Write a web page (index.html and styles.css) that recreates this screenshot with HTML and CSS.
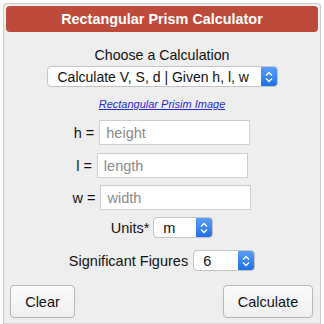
FILE: index.html
```html
<!DOCTYPE html>
<html lang="en">
<head>
    <meta charset="UTF-8">
    <meta name="viewport" content="width=device-width, initial-scale=1.0">
    <title>Rectangular Prism Calculator</title>
    <link rel="stylesheet" href="styles.css">
</head>
<body>
    <div class="calc">
        <div class="calc-head">Rectangular Prism Calculator</div>
        <div class="calc-body">
            <div class="row choose">Choose a Calculation</div>
            <div class="row sel-row">
                <span class="sel sel-wide">
                    <select>
                        <option>Calculate V, S, d | Given h, l, w</option>
                    </select>
                    <span class="stepper">
                        <svg width="8" height="12" viewBox="0 0 8 12"><path d="M1 4.5 L4 1.5 L7 4.5 M1 7.5 L4 10.5 L7 7.5" fill="none" stroke="#fff" stroke-width="1.4"/></svg>
                    </span>
                </span>
            </div>
            <div class="row link-row"><a href="#">Rectangular Prisim Image</a></div>

            <div class="row field h-row"><label>h =</label><input type="text" placeholder="height"></div>
            <div class="row field l-row"><label>l =</label><input type="text" placeholder="length"></div>
            <div class="row field w-row"><label>w =</label><input type="text" placeholder="width"></div>

            <div class="row units-row">
                <label>Units*</label>
                <span class="sel sel-units">
                    <select><option>m</option></select>
                    <span class="stepper">
                        <svg width="8" height="12" viewBox="0 0 8 12"><path d="M1 4.5 L4 1.5 L7 4.5 M1 7.5 L4 10.5 L7 7.5" fill="none" stroke="#fff" stroke-width="1.4"/></svg>
                    </span>
                </span>
            </div>
            <div class="row sig-row">
                <label>Significant Figures</label>
                <span class="sel sel-sig">
                    <select><option>6</option></select>
                    <span class="stepper">
                        <svg width="8" height="12" viewBox="0 0 8 12"><path d="M1 4.5 L4 1.5 L7 4.5 M1 7.5 L4 10.5 L7 7.5" fill="none" stroke="#fff" stroke-width="1.4"/></svg>
                    </span>
                </span>
            </div>

            <div class="buttons">
                <button class="btn btn-clear">Clear</button>
                <button class="btn btn-calc">Calculate</button>
            </div>
        </div>
    </div>
</body>
</html>
```

FILE: styles.css
```css
body {
    margin: 0;
    padding: 0;
    background: #fff;
    font-family: "Liberation Sans", Arial, sans-serif;
    color: #111;
}
.calc {
    margin: 3px 3px 0;
    padding: 2px;
    height: 315px;
    border: 1px solid #c9c9c9;
    border-bottom-color: #d6d6d6;
    border-radius: 4px 4px 0 0;
    background-color: #eeeeee;
}
.calc-head {
    height: 26px;
    line-height: 26px;
    background-color: #bd4a3a;
    border-radius: 4px;
    color: #fff;
    font-weight: bold;
    font-size: 14.4px;
    text-align: center;
}
.row {
    display: flex;
    justify-content: center;
    align-items: center;
    font-size: 14.5px;
}
.choose {
    margin-top: 14px;
    line-height: 18px;
    font-size: 14.2px;
}
.sel-row {
    margin-top: 2px;
}

.sel {
    display: inline-flex;
    height: 21px;
    box-sizing: border-box;
    border: 1px solid #c4c4c4;
    border-radius: 4px;
    background: #fff;
    overflow: hidden;
}
.sel select {
    flex: 1;
    min-width: 0;
    appearance: none;
    -webkit-appearance: none;
    border: none;
    background: transparent;
    font-family: "Liberation Sans", Arial, sans-serif;
    font-size: 14.5px;
    color: #111;
    padding: 0 0 0 9px;
    margin: 0;
    outline: none;
}
.sel-wide select {
    font-size: 14px;
    padding-left: 10px;
}
.stepper {
    width: 16px;
    flex: none;
    display: flex;
    align-items: center;
    justify-content: center;
    background: linear-gradient(#5a9ef7, #1f6fe6);
}
.sel-wide {
    width: 231px;
}
.sel-units {
    width: 60px;
    margin-left: 4px;
}
.sel-sig {
    width: 62px;
    margin-left: 5px;
}

.link-row {
    margin-top: 10px;
    line-height: 14px;
    font-size: 11px;
}
.link-row a {
    color: #2a2ad0;
    font-style: italic;
}

.field label {
    margin-right: 5px;
}
.field input {
    width: 151px;
    height: 25px;
    box-sizing: border-box;
    border: 1px solid #cfcfcf;
    background: #fff;
    padding: 0 0 0 6px;
    margin: 0;
    font-family: "Liberation Sans", Arial, sans-serif;
    font-size: 14.5px;
}
.field input::placeholder {
    color: #8a8a8a;
}
.h-row {
    margin-top: 9px;
}
.l-row {
    margin-top: 8px;
}
.w-row {
    margin-top: 7px;
}
.units-row {
    margin-top: 7px;
}
.sig-row {
    margin-top: 12px;
}

.buttons {
    display: flex;
    justify-content: space-between;
    margin-top: 14px;
    padding: 0 5px 0 4px;
}
.btn {
    height: 33px;
    border: 1px solid #b5b5b5;
    border-radius: 4px;
    background: linear-gradient(#fbfbfb, #f0f0f0);
    font-family: "Liberation Sans", Arial, sans-serif;
    font-size: 14.5px;
    color: #111;
    padding: 0;
}
.btn-clear {
    width: 65px;
}
.btn-calc {
    width: 90px;
}
```
